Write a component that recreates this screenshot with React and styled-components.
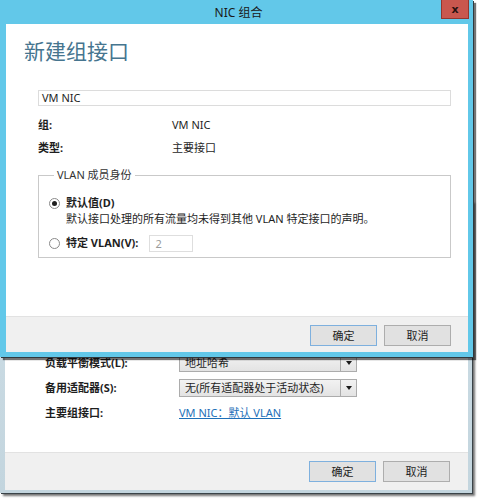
import React from 'react';
import styled, { createGlobalStyle } from 'styled-components';

const GlobalStyle = createGlobalStyle`
  html, body {
    margin: 0;
    padding: 0;
    background: #ffffff;
  }
  body {
    font-family: "Noto Sans", "Noto Sans CJK SC", sans-serif;
    font-size: 11px;
    color: #1e1e1e;
  }
  * {
    box-sizing: border-box;
  }
`;

const Desktop = styled.div`
  position: relative;
  width: 479px;
  height: 499px;
  overflow: hidden;
  background: #ffffff;
`;

/* ---------- window behind ---------- */

const BackWindow = styled.div`
  position: absolute;
  left: 0;
  top: 200px;
  width: 472px;
  height: 293px;
  display: flex;
  flex-direction: column;
  padding: 0 4px 3px 5px;
  background: linear-gradient(#cfdfe7, #c3d5de);
  box-shadow: 1px 1px 0 #3a4348, 3px 3px 2px rgba(0, 0, 0, 0.55);
`;

const BackClient = styled.div`
  flex: 1;
  display: flex;
  flex-direction: column;
  background: #ffffff;
`;

const BackBody = styled.div`
  flex: 1;
  display: flex;
  flex-direction: column;
  gap: 7px;
  padding: 154px 0 0 40px;
`;

const SettingRow = styled.div`
  display: grid;
  grid-template-columns: 134px 178px;
  align-items: center;
  height: 18px;
`;

const SettingLabel = styled.span`
  font-weight: 700;
  line-height: 18px;
  white-space: nowrap;
`;

const Select = styled.div`
  display: flex;
  height: 18px;
  border: 1px solid #acacac;
  background: linear-gradient(#f2f2f2, #e3e3e3);
`;

const SelectText = styled.span`
  flex: 1;
  padding-left: 5px;
  line-height: 16px;
  white-space: nowrap;
  overflow: hidden;
`;

const SelectArrow = styled.span`
  width: 16px;
  border-left: 1px solid #acacac;
  display: flex;
  align-items: center;
  justify-content: center;

  &::after {
    content: '';
    border-left: 3px solid transparent;
    border-right: 3px solid transparent;
    border-top: 4px solid #1a1a1a;
  }
`;

const Link = styled.a`
  color: #1d6fb8;
  text-decoration: underline;
  line-height: 18px;
  white-space: nowrap;
  cursor: pointer;
`;

/* ---------- shared ---------- */

const Footer = styled.div`
  height: ${props => props.height}px;
  display: flex;
  justify-content: flex-end;
  align-items: flex-start;
  gap: 7px;
  padding: 8px ${props => props.right}px 0 0;
  background: #f0f0f0;
  border-top: 1px solid #e2e2e2;
`;

const Button = styled.button`
  width: 67px;
  height: 21px;
  padding: 0;
  border: 1px solid ${props => (props.primary ? '#7eb0de' : '#adadad')};
  background: #e1e1e1;
  font-family: inherit;
  font-size: 11px;
  color: #1e1e1e;
  line-height: 19px;
`;

/* ---------- dialog ---------- */

const Dialog = styled.div`
  position: absolute;
  left: 0;
  top: 0;
  width: 473px;
  height: 357px;
  display: flex;
  flex-direction: column;
  background: #62c8e9;
  box-shadow: 1px 1px 0 #2f393e, 3px 3px 1px rgba(0, 0, 0, 0.55);
`;

const TitleBar = styled.div`
  position: relative;
  height: 24px;
  display: flex;
  align-items: center;
  justify-content: center;
  padding-left: 4px;
  font-size: 12px;
  color: #1a1a1a;
`;

const CloseButton = styled.div`
  position: absolute;
  top: 0;
  right: 4px;
  width: 28px;
  height: 19px;
  background: #c9574e;
  border: 1px solid #94362f;
  border-top: none;
  display: flex;
  align-items: center;
  justify-content: center;
  font-family: "DejaVu Sans", sans-serif;
  font-weight: 700;
  font-size: 11px;
  color: #2a1210;
  line-height: 1;
`;

const ClientFrame = styled.div`
  flex: 1;
  display: flex;
  flex-direction: column;
  padding: 0 5px 5px 6px;
`;

const Client = styled.div`
  flex: 1;
  display: flex;
  flex-direction: column;
  background: #ffffff;
`;

const ClientBody = styled.div`
  flex: 1;
  padding: 15px 17px 0 32px;
`;

const Heading = styled.h1`
  margin: 0 0 27px -14px;
  font-size: 21px;
  font-weight: 400;
  line-height: 24px;
  color: #46758f;
`;

const TextField = styled.div`
  height: 16px;
  border: 1px solid #dcdcdc;
  padding-left: 3px;
  line-height: 14px;
`;

const InfoGrid = styled.div`
  display: grid;
  grid-template-columns: 134px 1fr;
  row-gap: 5px;
  margin-top: 10px;
  line-height: 18px;
`;

const InfoLabel = styled.span`
  font-weight: 700;
`;

const GroupBox = styled.fieldset`
  margin: 10px 0 0;
  padding: 12px 0 5px 10px;
  border: 1px solid #c9c9c9;
`;

const Legend = styled.legend`
  margin-left: 5px;
  padding: 0 3px;
  line-height: 16px;
  color: #333;
`;

const Option = styled.label`
  display: flex;
  align-items: center;
  gap: 6px;
  height: ${props => props.h}px;
  margin-top: ${props => props.top || 0}px;
  font-weight: 700;
  line-height: 16px;
  white-space: nowrap;
`;

const Radio = styled.span`
  position: relative;
  width: 11px;
  height: 11px;
  border: 1px solid #8a8a8a;
  border-radius: 50%;
  background: #fff;

  &::after {
    content: '';
    display: ${props => (props.checked ? 'block' : 'none')};
    position: absolute;
    left: 2px;
    top: 2px;
    width: 5px;
    height: 5px;
    border-radius: 50%;
    background: #1e1e1e;
  }
`;

const Description = styled.div`
  padding-left: 17px;
  height: 16px;
  line-height: 16px;
  white-space: nowrap;
`;

const VlanInput = styled.span`
  width: 44px;
  height: 17px;
  margin-left: 5px;
  border: 1px solid #dedede;
  padding-left: 5px;
  font-weight: 400;
  color: #9a9a9a;
  line-height: 15px;
`;

const App = () => (
  <>
    <GlobalStyle />
    <Desktop>
      <BackWindow>
        <BackClient>
          <BackBody>
            <SettingRow>
              <SettingLabel>负载平衡模式(L):</SettingLabel>
              <Select>
                <SelectText>地址哈希</SelectText>
                <SelectArrow />
              </Select>
            </SettingRow>
            <SettingRow>
              <SettingLabel>备用适配器(S):</SettingLabel>
              <Select>
                <SelectText>无(所有适配器处于活动状态)</SelectText>
                <SelectArrow />
              </Select>
            </SettingRow>
            <SettingRow>
              <SettingLabel>主要组接口:</SettingLabel>
              <Link>VM NIC：默认 VLAN</Link>
            </SettingRow>
          </BackBody>
          <Footer height={38} right={18}>
            <Button primary>确定</Button>
            <Button>取消</Button>
          </Footer>
        </BackClient>
      </BackWindow>

      <Dialog>
        <TitleBar>
          NIC 组合
          <CloseButton>x</CloseButton>
        </TitleBar>
        <ClientFrame>
          <Client>
            <ClientBody>
              <Heading>新建组接口</Heading>
              <TextField>VM NIC</TextField>
              <InfoGrid>
                <InfoLabel>组:</InfoLabel>
                <span>VM NIC</span>
                <InfoLabel>类型:</InfoLabel>
                <span>主要接口</span>
              </InfoGrid>
              <GroupBox>
                <Legend>VLAN 成员身份</Legend>
                <Option h={16}>
                  <Radio checked />
                  默认值(D)
                </Option>
                <Description>默认接口处理的所有流量均未得到其他 VLAN 特定接口的声明。</Description>
                <Option h={18} top={7}>
                  <Radio />
                  特定 VLAN(V):
                  <VlanInput>2</VlanInput>
                </Option>
              </GroupBox>
            </ClientBody>
            <Footer height={36} right={17}>
              <Button primary>确定</Button>
              <Button>取消</Button>
            </Footer>
          </Client>
        </ClientFrame>
      </Dialog>
    </Desktop>
  </>
);

export default App;
